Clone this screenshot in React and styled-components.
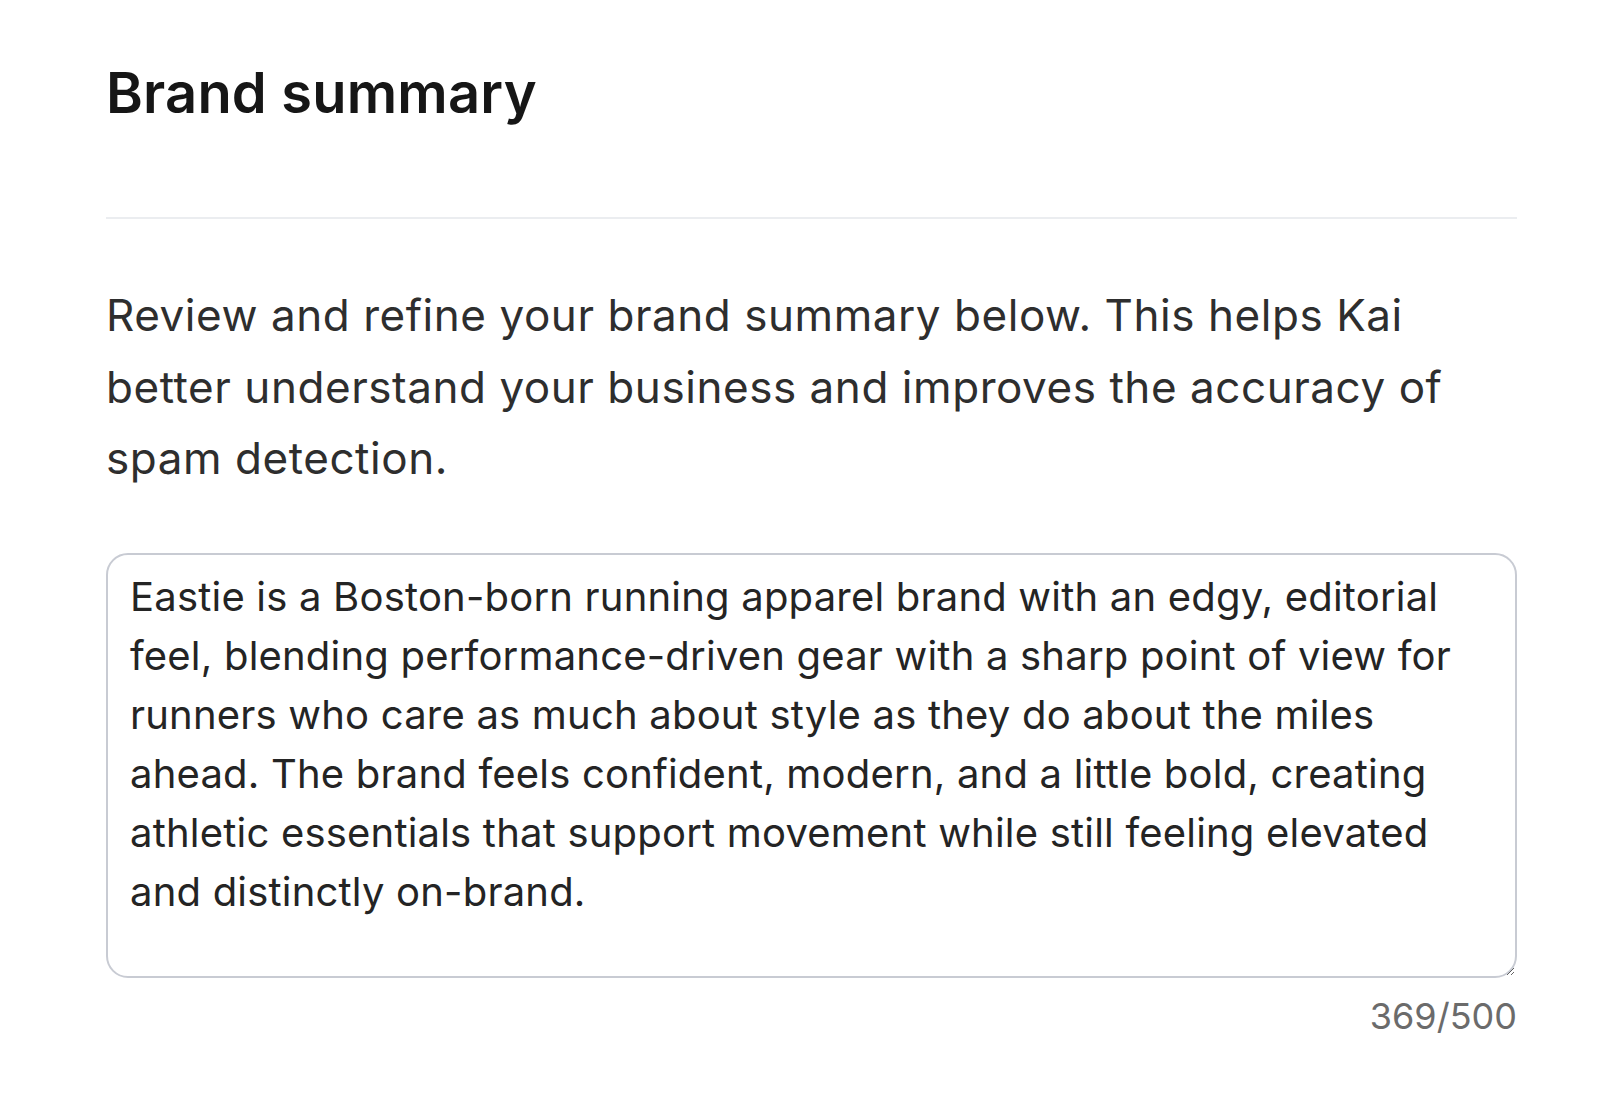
import React, { useState } from 'react';
import styled, { createGlobalStyle } from 'styled-components';

const GlobalStyle = createGlobalStyle`
  html, body {
    margin: 0;
    padding: 0;
    background: #ffffff;
  }
  body {
    font-family: Inter, "Noto Sans", "Liberation Sans", sans-serif;
    -webkit-font-smoothing: antialiased;
  }
`;

const Panel = styled.section`
  box-sizing: border-box;
  width: 100%;
  padding: 59px 83px 40px 106px;
  display: flex;
  flex-direction: column;
`;

const Title = styled.h2`
  margin: 0;
  font-size: 56px;
  line-height: 68px;
  font-weight: 600;
  color: #161616;
  letter-spacing: 0.2px;
`;

const Divider = styled.hr`
  margin: 90px 0 0;
  border: none;
  height: 2px;
  background: #ebedf0;
`;

const Description = styled.p`
  margin: 61px 0 0;
  font-size: 44px;
  line-height: 71.5px;
  font-weight: 400;
  color: #2e2e2e;
  letter-spacing: 0.55px;
`;

const Field = styled.div`
  margin-top: 58px;
  display: flex;
  flex-direction: column;
`;

const SummaryInput = styled.textarea`
  box-sizing: border-box;
  width: 100%;
  height: 425px;
  padding: 12px 22px;
  border: 2px solid #c8cbd3;
  border-radius: 22px;
  font-family: inherit;
  font-size: 40px;
  line-height: 59px;
  letter-spacing: 0.2px;
  color: #242424;
  background: #ffffff;
  resize: vertical;
  outline: none;
`;

const Counter = styled.div`
  margin-top: 16px;
  align-self: flex-end;
  font-size: 36px;
  line-height: 44px;
  color: #6b6b6b;
`;

const initialSummary =
  'Eastie is a Boston-born running apparel brand with an edgy, editorial feel, blending performance-driven gear with a sharp point of view for runners who care as much about style as they do about the miles ahead. The brand feels confident, modern, and a little bold, creating athletic essentials that support movement while still feeling elevated and distinctly on-brand.';

const MAX = 500;

const App = () => {
  const [summary, setSummary] = useState(initialSummary);

  return (
    <>
      <GlobalStyle />
      <Panel>
        <Title>Brand summary</Title>
        <Divider />
        <Description>
          Review and refine your brand summary below. This helps Kai better
          understand your business and improves the accuracy of spam detection.
        </Description>
        <Field>
          <SummaryInput
            value={summary}
            maxLength={MAX}
            onChange={(e) => setSummary(e.target.value)}
          />
          <Counter>
            {summary.length}/{MAX}
          </Counter>
        </Field>
      </Panel>
    </>
  );
};

export default App;
